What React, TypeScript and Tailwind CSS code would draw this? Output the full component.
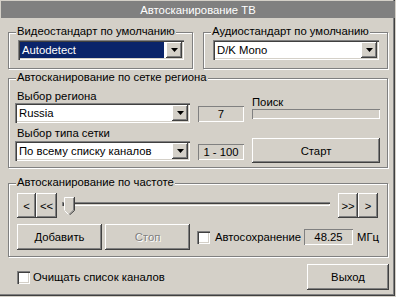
import { clsx } from 'clsx';
import type { ReactNode } from 'react';

const sunken = 'shadow-[inset_1px_1px_#808080,inset_2px_2px_#404040,inset_-1px_-1px_#fff,inset_-2px_-2px_#d4d0c8]';
const raised = 'shadow-[inset_-1px_-1px_#404040,inset_1px_1px_#fff,inset_-2px_-2px_#808080,inset_2px_2px_#d4d0c8]';
const thin = 'shadow-[inset_1px_1px_#808080,inset_-1px_-1px_#fff]';

function Group({ title, className, children }: { title: string; className?: string; children?: ReactNode }) {
  return (
    <div className={clsx('relative border border-[#808080] shadow-[1px_1px_#fff,inset_1px_1px_#fff]', className)}>
      <span className="absolute left-[7px] -top-[9px] px-[1px] bg-[#d4d0c8] leading-[14px] whitespace-nowrap">{title}</span>
      {children}
    </div>
  );
}

function Combo({ value, className, active }: { value: string; className?: string; active?: boolean }) {
  return (
    <div className={clsx('flex h-[20px] bg-white p-[2px]', sunken, className)}>
      <div className={clsx('flex-1 flex items-center pl-[2px] mr-[2px]', active ? 'bg-[#0a246a] text-white' : '')}>{value}</div>
      <div className={clsx('w-[16px] h-full flex items-center justify-center bg-[#d4d0c8]', raised)}>
        <svg width="7" height="4" viewBox="0 0 7 4">
          <path d="M0 0H7L3.5 4Z" fill="#000" />
        </svg>
      </div>
    </div>
  );
}

function Btn({ children, className, disabled }: { children: ReactNode; className?: string; disabled?: boolean }) {
  return (
    <div
      className={clsx(
        'flex items-center justify-center bg-[#d4d0c8]',
        raised,
        disabled && 'text-[#808080] [text-shadow:1px_1px_#fff]',
        className
      )}
    >
      {children}
    </div>
  );
}

function Check({ className }: { className?: string }) {
  return <div className={clsx('w-[13px] h-[13px] bg-white shrink-0', sunken, className)} />;
}

function Field({ children, className }: { children: ReactNode; className?: string }) {
  return <div className={clsx('h-[16px] flex items-center justify-center', thin, className)}>{children}</div>;
}

export default function App() {
  return (
    <div className="relative w-[396px] h-[297px] bg-[#d4d0c8] flex flex-col text-[11.3px] leading-[14px] text-black font-['Liberation_Sans',Arial,sans-serif] shadow-[inset_-1px_-1px_#d4d0c8,inset_-2px_-2px_#404040,inset_-3px_-3px_#808080]">
      <div className="mx-[1px] mt-[1px] h-[17px] bg-[#808080] text-white flex items-center justify-center">
        Автосканирование ТВ
      </div>

      <div className="px-[8px]">
        <div className="flex gap-[10px] mt-[14px]">
          <Group title="Видеостандарт по умолчанию" className="w-[185px] h-[37px]">
            <Combo value="Autodetect" active className="ml-[9px] mt-[7px] w-[166px]" />
          </Group>
          <Group title="Аудиостандарт по умолчанию" className="w-[185px] h-[37px]">
            <Combo value="D/K Mono" className="ml-[9px] mt-[7px] w-[166px]" />
          </Group>
        </div>

        <Group title="Автосканирование по сетке региона" className="mt-[9px] h-[90px] flex">
          <div className="ml-[6px] w-[175px] mt-[10px] flex flex-col">
            <span className="ml-[2px]">Выбор региона</span>
            <Combo value="Russia" />
            <span className="ml-[2px] mt-[3px]">Выбор типа сетки</span>
            <Combo value="По всему списку каналов" className="mt-[1px]" />
          </div>
          <div className="ml-[8px] w-[46px] mt-[27px] flex flex-col">
            <Field>7</Field>
            <Field className="mt-[22px]">1 - 100</Field>
          </div>
          <div className="ml-[8px] w-[128px] mt-[16px] flex flex-col">
            <span>Поиск</span>
            <div className={clsx('h-[10px]', thin)} />
            <Btn className="mt-[19px] h-[25px]">Старт</Btn>
          </div>
        </Group>

        <Group title="Автосканирование по частоте" className="mt-[15px] h-[74px]">
          <div className="flex ml-[8px] mt-[9px] h-[25px]">
            <Btn className="w-[19px]">&lt;</Btn>
            <Btn className="w-[21px]">&lt;&lt;</Btn>
            <div className="relative w-[281px] h-full">
              <div className={clsx('ml-[5px] mt-[9px] w-[268px] h-[4px]', sunken)} />
              <svg className="absolute left-[7px] top-[4px]" width="11" height="18" viewBox="0 0 11 18">
                <path d="M0 0H10V13L5 18L0 13Z" fill="#d4d0c8" />
                <path d="M0.5 13V0.5H9.5" stroke="#fff" fill="none" />
                <path d="M10.5 0V13.5L5.5 18" stroke="#404040" fill="none" />
                <path d="M9.5 1V13L5 17.5" stroke="#808080" fill="none" />
                <path d="M0.5 13.5L4.5 17.5" stroke="#fff" fill="none" />
              </svg>
            </div>
            <Btn className="w-[20px]">&gt;&gt;</Btn>
            <Btn className="w-[20px]">&gt;</Btn>
          </div>
          <div className="flex items-center ml-[8px] mt-[6px]">
            <Btn className="w-[85px] h-[26px]">Добавить</Btn>
            <Btn disabled className="ml-[3px] w-[85px] h-[26px]">Стоп</Btn>
            <Check className="ml-[7px]" />
            <span className="ml-[5px] w-[89px] whitespace-nowrap">Автосохранение</span>
            <Field className="w-[49px]">48.25</Field>
            <span className="ml-[4px]">МГц</span>
          </div>
        </Group>

        <div className="flex items-center mt-[7px]">
          <Check className="ml-[9px]" />
          <span className="ml-[3px]">Очищать список каналов</span>
          <Btn className="ml-auto -mr-[1px] w-[82px] h-[26px]">Выход</Btn>
        </div>
      </div>
    </div>
  );
}
